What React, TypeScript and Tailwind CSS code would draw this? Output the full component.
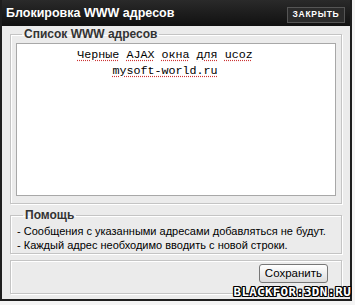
function Fieldset({
  legend,
  className,
  children,
}: {
  legend?: string;
  className?: string;
  children: React.ReactNode;
}) {
  return (
    <fieldset
      className={`border border-[#c4c4c4] shadow-[inset_1px_1px_0_#fff,1px_1px_0_#fff] ${className ?? ""}`}
    >
      {legend && (
        <legend className="ml-[6px] px-[2px] text-[12px] font-bold leading-[14px] text-[#333]">
          {legend}
        </legend>
      )}
      {children}
    </fieldset>
  );
}

const dotted = "underline decoration-[#c33] decoration-dotted underline-offset-2";

export default function App() {
  return (
    <div className="relative h-[305px] w-[355px] overflow-hidden bg-[#f4f4f4] font-[family-name:'Liberation_Sans',Arial,sans-serif]">
      <div className="flex h-[301px] w-[352px] flex-col border-2 border-t-0 border-[#1e1e1e] bg-[#ebebeb]">
        {/* title */}
        <div className="flex h-[26px] shrink-0 items-center justify-between bg-gradient-to-b from-[#2a2a2a] to-[#111] pl-[4px] pr-[5px]">
          <span className="text-[12.5px] font-bold text-white">Блокировка WWW адресов</span>
          <button className="mt-[3px] flex h-[16px] w-[58px] items-center justify-center border border-[#555] bg-[#2b2b2b] text-[8.5px] font-bold tracking-[0.7px] text-white">
            ЗАКРЫТЬ
          </button>
        </div>

        <div className="flex flex-col px-[8px] pt-[1px]">
          <Fieldset legend="Список WWW адресов" className="h-[177px] px-[5px] pb-[5px]">
            <div className="mt-[2px] h-[153px] border border-[#a8a8a8] bg-white pr-[22px] pt-[3px] text-center font-[family-name:'Liberation_Mono','Courier_New',monospace] text-[11.7px] leading-[16px] text-black">
              <div>
                <span className={dotted}>Черные</span> <span className={dotted}>AJAX</span>{" "}
                <span className={dotted}>окна</span> <span className={dotted}>для</span>{" "}
                <span className={dotted}>ucoz</span>
              </div>
              <div>
                <span className={dotted}>mysoft-world.ru</span>
              </div>
            </div>
          </Fieldset>

          <Fieldset legend="Помощь" className="mt-[4px] h-[46px] px-[6px]">
            <div className="whitespace-nowrap pt-[2px] text-[11px] leading-[14px] text-black">
              <div>- Сообщения с указанными адресами добавляться не будут.</div>
              <div>- Каждый адрес необходимо вводить с новой строки.</div>
            </div>
          </Fieldset>

          <Fieldset className="mt-[6px] flex h-[34px] items-center justify-end pr-[13px] pt-[3px]">
            <button className="h-[19px] rounded-[3px] border border-[#777] bg-gradient-to-b from-white to-[#dcdcdc] px-[5px] text-[11.5px] leading-[15px] text-black">
              Сохранить
            </button>
          </Fieldset>
        </div>
      </div>

      <div className="absolute bottom-[3px] right-[4px] font-[family-name:'DejaVu_Sans_Mono',monospace] text-[12.5px] font-bold tracking-[0.3px] text-white [text-shadow:1px_0_0_#000,-1px_0_0_#000,0_1px_0_#000,0_-1px_0_#000,1px_1px_0_#000,-1px_-1px_0_#000,1px_-1px_0_#000,-1px_1px_0_#000]">
        BLACKFOR:3DN:RU
      </div>
    </div>
  );
}
